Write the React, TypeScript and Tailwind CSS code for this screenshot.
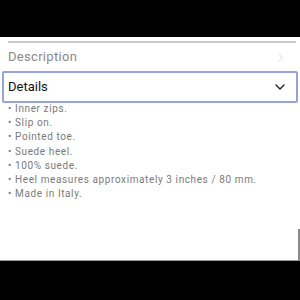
import {ChevronDown, ChevronRight} from 'lucide-react';

const DETAILS = [
  'Inner zips.',
  'Slip on.',
  'Pointed toe.',
  'Suede heel.',
  '100% suede.',
  'Heel measures approximately 3 inches / 80 mm.',
  'Made in Italy.',
];

export default function App() {
  return (
    <div className="w-[300px] h-[300px] bg-black flex flex-col overflow-hidden" style={{fontFamily: 'Roboto, "Liberation Sans", sans-serif'}}>
      <div className="h-[37px] shrink-0" />

      <div className="relative h-[224px] shrink-0 bg-white border-b border-[#9a9a9a]">
        {/* top rule */}
        <div className="mt-[4px] ml-[8px] mr-[4px] h-[2px] bg-[#c9c9c9]" />

        {/* Description row */}
        <div className="h-[28px] flex items-center justify-between pl-[8px] pr-[12px]">
          <span className="text-[13px] tracking-[0.3px] text-[#8a8a8a]">Description</span>
          <ChevronRight className="w-[15px] h-[15px] text-[#cfcfcf]" strokeWidth={1.25} />
        </div>

        {/* Details header, focused */}
        <div className="mx-[2px] h-[32px] border-2 border-[#95a3dc] rounded-[2px] flex items-center justify-between pl-[4px] pr-[8px]">
          <span className="text-[13px] text-[#111]">Details</span>
          <ChevronDown className="w-[16px] h-[16px] text-[#222]" strokeWidth={2} />
        </div>

        {/* Details list */}
        <ul className="-mt-[1px] pl-[8px] text-[10px] leading-[14.2px] tracking-[0.6px] text-[#7a7a7a]">
          {DETAILS.map(item => (
            <li key={item}>• {item}</li>
          ))}
        </ul>

        <div className="absolute right-0 top-[192px] w-[2px] h-[32px] bg-[#8a8a8a]" />
      </div>
    </div>
  );
}
